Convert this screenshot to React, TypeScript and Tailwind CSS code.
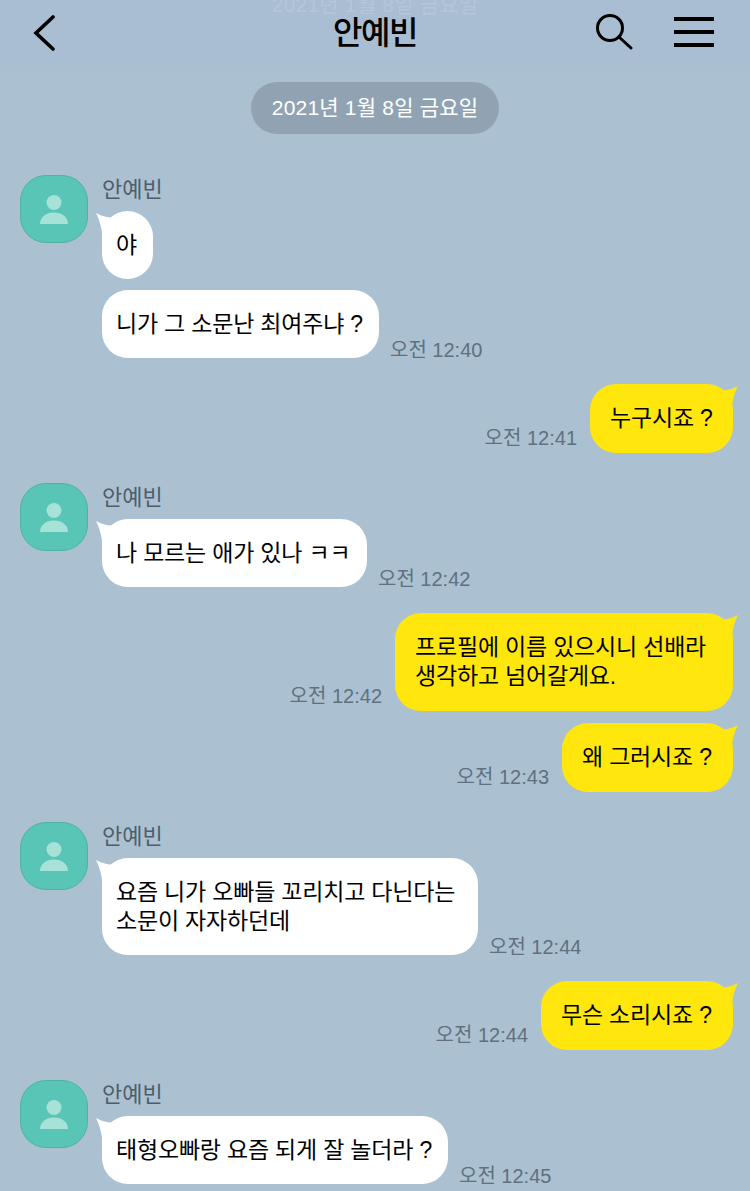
function Avatar() {
  return (
    <div className="flex h-[68px] w-[68px] shrink-0 items-center justify-center rounded-[26px] border border-[#4fb3a4] bg-[#58c5b6]">
      <svg width="28" height="29" viewBox="0 0 28 29" fill="#a6e2d8">
        <circle cx="14" cy="7.5" r="7.5" />
        <path d="M0 29c0-7 6-11.5 14-11.5S28 22 28 29z" />
      </svg>
    </div>
  );
}

function LeftTail() {
  return (
    <svg className="absolute left-[-6px] top-[2px]" width="26" height="28" viewBox="0 0 26 28" fill="#fff">
      <path d="M0 0c7 4 14 5 24 5l2 23H7C6 16 4 8 0 0z" />
    </svg>
  );
}

function RightTail() {
  return (
    <svg className="absolute right-[-5px] top-[2px]" width="26" height="28" viewBox="0 0 26 28" fill="#ffe60d">
      <path d="M26 0c-7 4-14 5-24 5L0 28h19c1-12 3-20 7-28z" />
    </svg>
  );
}

function Time({ children }: { children: string }) {
  return <span className="whitespace-nowrap text-[20px] leading-[24px] text-[#5f7080]">{children}</span>;
}

function Incoming({ width, height, text, time, tail, mt }: { width: string; height: string; text: string[]; time?: string; tail?: boolean; mt?: string }) {
  return (
    <div className={`flex items-end gap-[11px] ${mt ?? ""}`}>
      <div className={`relative rounded-[26px] bg-white pl-[14px] pt-[20px] text-[23px] leading-[29px] tracking-[-0.2px] text-black ${width} ${height}`}>
        {tail && <LeftTail />}
        <div className="relative whitespace-nowrap">
          {text.map((t) => (
            <div key={t}>{t}</div>
          ))}
        </div>
      </div>
      {time && (
        <div className="mb-[-6px]">
          <Time>{time}</Time>
        </div>
      )}
    </div>
  );
}

function Group({ children, mt }: { children: React.ReactNode; mt: string }) {
  return (
    <div className={`flex gap-[14px] pl-[20px] ${mt}`}>
      <Avatar />
      <div className="flex flex-col">
        <div className="h-[36px] text-[22px] leading-[29px] text-[#4e5d6c]">안예빈</div>
        {children}
      </div>
    </div>
  );
}

function Outgoing({ width, height, text, time, mt }: { width: string; height: string; text: string[]; time: string; mt: string }) {
  return (
    <div className={`flex items-end justify-end gap-[13px] pr-[17px] ${mt}`}>
      <div className="mb-[1px]">
        <Time>{time}</Time>
      </div>
      <div className={`relative rounded-[26px] bg-[#ffe60d] pl-[20px] pt-[20px] text-[23px] leading-[29px] tracking-[-0.2px] text-black ${width} ${height}`}>
        <RightTail />
        <div className="relative whitespace-nowrap">
          {text.map((t) => (
            <div key={t}>{t}</div>
          ))}
        </div>
      </div>
    </div>
  );
}

export default function App() {
  return (
    <div className="relative h-[1191px] w-[750px] overflow-hidden bg-[#abc1d1] font-['Liberation_Sans','Noto_Sans_CJK_KR',sans-serif]">
      {/* Header */}
      <div className="relative flex h-[72px] items-start justify-between overflow-hidden bg-linear-to-b from-[#a9bdd3] from-80% to-[#abc1d1] pl-[32px] pr-[36px]">
        <div className="absolute left-0 right-0 top-[-10px] text-center text-[21px] leading-[29px] tracking-[0.2px] text-[#b5c6d8]">2021년 1월 8일 금요일</div>
        <svg className="relative mt-[15px]" width="24" height="36" viewBox="0 0 24 36" fill="none" stroke="#000" strokeWidth="3.6" strokeLinecap="round">
          <path d="M21 2 4 18l17 16" />
        </svg>
        <div className="absolute left-0 right-0 top-[13px] text-center text-[32px] font-medium leading-[40px] tracking-[-1.5px] text-black">안예빈</div>
        <div className="relative flex items-start gap-[41px]">
          <svg width="37" height="37" viewBox="0 0 37 37" fill="none" stroke="#000" strokeWidth="3" strokeLinecap="round" className="mt-[14px]">
            <circle cx="14" cy="14" r="12.5" />
            <path d="m23 23 12 11" />
          </svg>
          <svg width="40" height="30" viewBox="0 0 40 30" fill="#000" className="mt-[17px]">
            <rect y="0" width="40" height="4" />
            <rect y="13" width="40" height="4" />
            <rect y="26" width="40" height="4" />
          </svg>
        </div>
      </div>

      {/* Date */}
      <div className="mt-[10px] flex justify-center">
        <div className="flex h-[52px] w-[248px] items-center justify-center rounded-[26px] bg-[#91a3b2] text-[21px] tracking-[0.2px] text-white">2021년 1월 8일 금요일</div>
      </div>

      <Group mt="mt-[41px]">
        <Incoming width="w-[51px]" height="h-[68px]" text={["야"]} tail />
        <Incoming mt="mt-[11px]" width="w-[277px]" height="h-[68px]" text={["니가 그 소문난 최여주냐 ?"]} time="오전 12:40" />
      </Group>

      <Outgoing mt="mt-[26px]" width="w-[143px]" height="h-[69px]" text={["누구시죠 ?"]} time="오전 12:41" />

      <Group mt="mt-[30px]">
        <Incoming width="w-[265px]" height="h-[68px]" text={["나 모르는 애가 있나 ㅋㅋ"]} time="오전 12:42" tail />
      </Group>

      <Outgoing mt="mt-[26px]" width="w-[338px]" height="h-[98px]" text={["프로필에 이름 있으시니 선배라", "생각하고 넘어갈게요."]} time="오전 12:42" />
      <Outgoing mt="mt-[12px]" width="w-[171px]" height="h-[69px]" text={["왜 그러시죠 ?"]} time="오전 12:43" />

      <Group mt="mt-[30px]">
        <Incoming width="w-[376px]" height="h-[97px]" text={["요즘 니가 오빠들 꼬리치고 다닌다는", "소문이 자자하던데"]} time="오전 12:44" tail />
      </Group>

      <Outgoing mt="mt-[26px]" width="w-[192px]" height="h-[69px]" text={["무슨 소리시죠 ?"]} time="오전 12:44" />

      <Group mt="mt-[30px]">
        <Incoming width="w-[346px]" height="h-[68px]" text={["태형오빠랑 요즘 되게 잘 놀더라 ?"]} time="오전 12:45" tail />
      </Group>
    </div>
  );
}
